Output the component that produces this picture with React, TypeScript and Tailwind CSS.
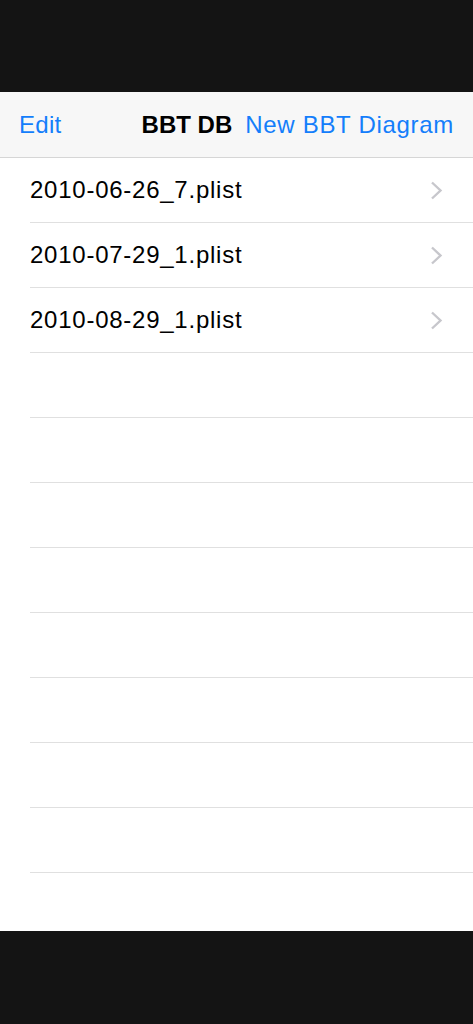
import React from "react";

const files = ["2010-06-26_7.plist", "2010-07-29_1.plist", "2010-08-29_1.plist"];

function Chevron() {
  return (
    <svg width="13" height="19" viewBox="0 0 13 19" className="shrink-0">
      <polyline points="2,1.5 10.5,9.5 2,17.5" fill="none" stroke="#c7c7cc" strokeWidth="2.4" />
    </svg>
  );
}

export default function App() {
  const rows = Array.from({ length: 11 }, (_, i) => files[i] ?? null);
  return (
    <div className="w-[473px] h-[1024px] bg-[#141414] flex flex-col" style={{ fontFamily: '"Liberation Sans", Arial, sans-serif' }}>
      <div className="h-[92px] shrink-0" />
      <div className="flex-1 bg-white flex flex-col">
        <div className="h-[66px] box-border border-b border-[#d6d6d6] bg-[#f7f7f7] flex items-center px-[19px] text-[24px]">
          <span className="text-[#147efb] tracking-[0.3px]">Edit</span>
          <span className="ml-auto font-bold text-black">BBT DB</span>
          <span className="ml-[13px] text-[#147efb] tracking-[0.7px]">New BBT Diagram</span>
        </div>
        {rows.map((f, i) => (
          <div key={i} className="pl-[30px]">
            <div className="h-[65px] box-border border-b border-[#e0e0e0] flex items-center pr-[30px]">
              {f && (
                <>
                  <span className="text-[24px] text-black tracking-[0.75px]">{f}</span>
                  <span className="ml-auto"><Chevron /></span>
                </>
              )}
            </div>
          </div>
        ))}
        <div className="flex-1" />
      </div>
      <div className="h-[93px] shrink-0" />
    </div>
  );
}
